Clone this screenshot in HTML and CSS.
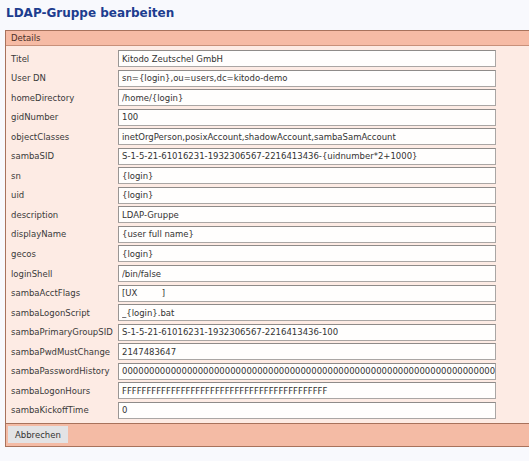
FILE: index.html
```html
<!DOCTYPE html>
<html lang="de">
<head>
<meta charset="utf-8">
<title>LDAP-Gruppe bearbeiten</title>
<link rel="stylesheet" href="styles.css">
</head>
<body>
<h1 class="page-title">LDAP-Gruppe bearbeiten</h1>
<div class="box">
  <div class="box-head">Details</div>
  <div class="box-body">
    <div class="row"><label class="lbl">Titel</label><input class="fld" type="text" value="Kitodo Zeutschel GmbH"></div>
    <div class="row"><label class="lbl">User DN</label><input class="fld" type="text" value="sn={login},ou=users,dc=kitodo-demo"></div>
    <div class="row"><label class="lbl">homeDirectory</label><input class="fld" type="text" value="/home/{login}"></div>
    <div class="row"><label class="lbl">gidNumber</label><input class="fld" type="text" value="100"></div>
    <div class="row"><label class="lbl">objectClasses</label><input class="fld" type="text" value="inetOrgPerson,posixAccount,shadowAccount,sambaSamAccount"></div>
    <div class="row"><label class="lbl">sambaSID</label><input class="fld" type="text" value="S-1-5-21-61016231-1932306567-2216413436-{uidnumber*2+1000}"></div>
    <div class="row"><label class="lbl">sn</label><input class="fld" type="text" value="{login}"></div>
    <div class="row"><label class="lbl">uid</label><input class="fld" type="text" value="{login}"></div>
    <div class="row"><label class="lbl">description</label><input class="fld" type="text" value="LDAP-Gruppe"></div>
    <div class="row"><label class="lbl">displayName</label><input class="fld" type="text" value="{user full name}"></div>
    <div class="row"><label class="lbl">gecos</label><input class="fld" type="text" value="{login}"></div>
    <div class="row"><label class="lbl">loginShell</label><input class="fld" type="text" value="/bin/false"></div>
    <div class="row"><label class="lbl">sambaAcctFlags</label><input class="fld" type="text" value="[UX         ]"></div>
    <div class="row"><label class="lbl">sambaLogonScript</label><input class="fld" type="text" value="_{login}.bat"></div>
    <div class="row"><label class="lbl">sambaPrimaryGroupSID</label><input class="fld" type="text" value="S-1-5-21-61016231-1932306567-2216413436-100"></div>
    <div class="row"><label class="lbl">sambaPwdMustChange</label><input class="fld" type="text" value="2147483647"></div>
    <div class="row"><label class="lbl">sambaPasswordHistory</label><input class="fld" type="text" value="00000000000000000000000000000000000000000000000000000000000000000000000000000000"></div>
    <div class="row"><label class="lbl">sambaLogonHours</label><input class="fld" type="text" value="FFFFFFFFFFFFFFFFFFFFFFFFFFFFFFFFFFFFFFFFFF"></div>
    <div class="row"><label class="lbl">sambaKickoffTime</label><input class="fld" type="text" value="0"></div>
  </div>
  <div class="box-foot"><button class="btn" type="button">Abbrechen</button></div>
</div>
</body>
</html>
```
FILE: styles.css
```css
html, body {
  margin: 0;
  padding: 0;
  overflow: hidden;
}
body {
  background: #f8f9fd;
  font-family: "DejaVu Sans", Verdana, sans-serif;
  color: #333333;
}
.page-title {
  margin: 0;
  padding: 6px 0 0 6px;
  height: 30px;
  box-sizing: border-box;
  font-size: 12px;
  line-height: 14px;
  font-weight: bold;
  color: #1d3d8f;
}
.box {
  margin-left: 5px;
  width: 524px;
  box-sizing: border-box;
  border: 1px solid #a8725c;
  border-right: none;
  background: #fdebe4;
}
.box-head {
  height: 14px;
  line-height: 14px;
  padding-left: 5px;
  font-size: 8.5px;
  color: #4a3028;
  background: #f6bba5;
  border-bottom: 1px solid #c8907a;
}
.box-body {
  padding: 4px 0 4px 5px;
  display: flex;
  flex-direction: column;
  gap: 2.55px;
}
.row {
  display: flex;
  align-items: center;
  height: 17px;
}
.lbl {
  width: 107px;
  flex: none;
  font-size: 8.5px;
  color: #3a3a3a;
}
.fld {
  box-sizing: border-box;
  width: 378px;
  height: 17px;
  margin: 0;
  padding: 0 0 0 3px;
  border: 1px solid #aaa6a4;
  border-top-color: #8f8b89;
  border-left-color: #9a9694;
  background: #fffefd;
  font-family: "DejaVu Sans", Verdana, sans-serif;
  font-size: 8.5px;
  color: #333333;
  outline: none;
}
.box-foot {
  height: 22px;
  display: flex;
  align-items: center;
  padding-left: 2px;
  background: #f4bba5;
  border-top: 1px solid #a8725c;
}
.btn {
  height: 17px;
  margin: 0;
  padding: 0 7px;
  border: none;
  background: #e3e3e5;
  font-family: "DejaVu Sans", Verdana, sans-serif;
  font-size: 8.5px;
  color: #333333;
}
```
